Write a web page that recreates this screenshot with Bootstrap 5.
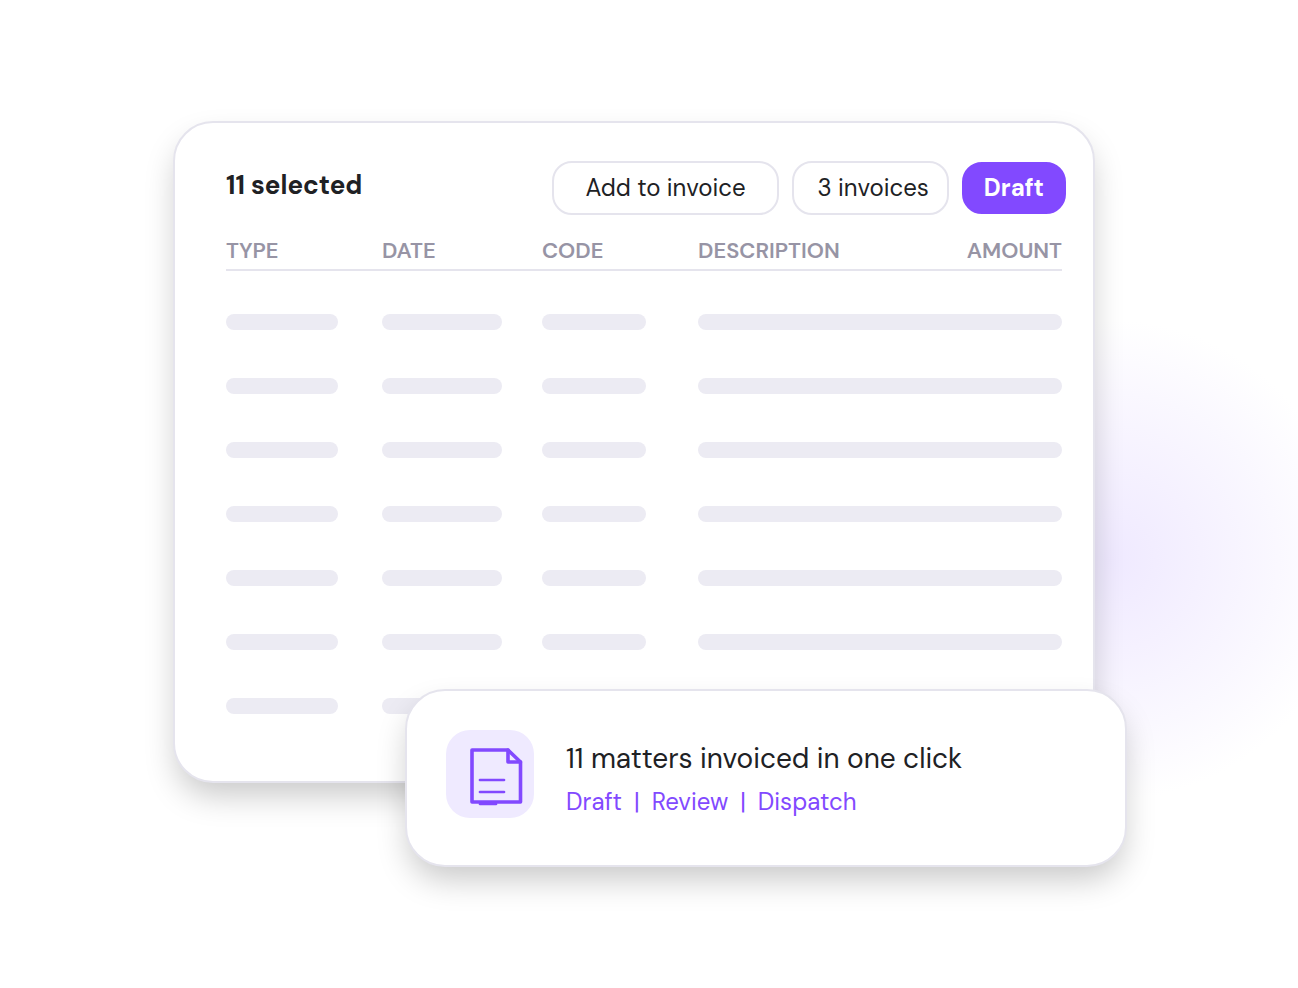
<!DOCTYPE html>
<html lang="en">
<head>
<meta charset="utf-8">
<meta name="viewport" content="width=device-width, initial-scale=1">
<title>Invoices</title>
<link href="https://cdn.jsdelivr.net/npm/bootstrap@5.3.0/dist/css/bootstrap.min.css" rel="stylesheet">
<style>
  :root {
    --violet: #8249ff;
    --violet-soft: #efeaff;
    --line: #e5e4ed;
    --bar: #ecebf3;
    --ink: #202124;
    --muted-ink: #9794a5;
  }
  body {
    min-height: 100vh;
    font-family: "DM Sans", Inter, sans-serif;
    color: var(--ink);
    background: #fff radial-gradient(circle 240px at calc(100% - 188px) 560px, #efe9ff 0, #f5f1ff 38%, #faf8ff 70%, #fff 100%) no-repeat;
  }
  .stage { padding: 121px 171px 121px 173px; }
  .panel {
    border: 2px solid var(--line);
    border-radius: 40px;
    background: #fff;
    box-shadow: 0 16px 32px -4px rgba(0, 0, 0, .22);
  }
  .sheet { margin-right: 32px; padding: 38px 31px 43px 51px; }
  .toolbar { margin-right: -4px; gap: 13px; }
  .count { font-size: 26px; line-height: 48px; font-weight: 700; }
  .pill {
    height: 54px;
    padding: 0 31px;
    border: 2px solid var(--line);
    border-radius: 20px;
    font-size: 24px;
    line-height: 50px;
    color: var(--ink);
    background: #fff;
  }
  .pill:hover { border-color: var(--violet); }
  .pill-short { padding: 0 18px 0 24px; }
  .pill-main {
    height: 52px;
    padding: 0 20px;
    border-color: var(--violet);
    background: var(--violet);
    color: #fff;
    line-height: 48px;
    font-weight: 700;
  }
  .ledger { table-layout: fixed; margin-top: 20px; }
  .ledger th {
    padding: 0 0 2px;
    border-bottom: 2px solid var(--line);
    font-size: 22px;
    line-height: 32px;
    font-weight: 600;
    color: var(--muted-ink);
  }
  .ledger td { height: 64px; padding: 0; vertical-align: middle; }
  .ledger tbody::before { content: ""; display: block; height: 19px; }
  .col-a { width: 156px; }
  .col-b { width: 160px; }
  .bar { height: 16px; border-radius: 8px; background: var(--bar); }
  .bar-type { width: 112px; }
  .bar-date { width: 120px; }
  .bar-code { width: 104px; }
  .notice {
    position: relative;
    margin: -94px 0 0 232px;
    padding: 39px 39px 47px;
    gap: 32px;
  }
  .tile { width: 88px; height: 88px; border-radius: 24px; background: var(--violet-soft); }
  .notice-title { font-size: 28px; line-height: 42px; }
  .steps { margin-top: 6px; gap: 12px; font-size: 24px; line-height: 32px; color: var(--violet); }
  .steps a { color: inherit; }
</style>
</head>
<body>
<main class="stage">
  <section class="panel sheet">
    <div class="toolbar d-flex align-items-center">
      <h1 class="count mb-0 me-auto align-self-start">11 selected</h1>
      <button type="button" class="btn pill">Add to invoice</button>
      <button type="button" class="btn pill pill-short">3 invoices</button>
      <button type="button" class="btn pill pill-main">Draft</button>
    </div>
    <table class="ledger w-100">
      <colgroup><col class="col-a"><col class="col-b"><col class="col-a"><col><col></colgroup>
      <thead>
        <tr><th scope="col">TYPE</th><th scope="col">DATE</th><th scope="col">CODE</th><th scope="col">DESCRIPTION</th><th scope="col" class="text-end">AMOUNT</th></tr>
      </thead>
      <tbody>
        <tr><td><div class="bar bar-type"></div></td><td><div class="bar bar-date"></div></td><td><div class="bar bar-code"></div></td><td colspan="2"><div class="bar"></div></td></tr>
        <tr><td><div class="bar bar-type"></div></td><td><div class="bar bar-date"></div></td><td><div class="bar bar-code"></div></td><td colspan="2"><div class="bar"></div></td></tr>
        <tr><td><div class="bar bar-type"></div></td><td><div class="bar bar-date"></div></td><td><div class="bar bar-code"></div></td><td colspan="2"><div class="bar"></div></td></tr>
        <tr><td><div class="bar bar-type"></div></td><td><div class="bar bar-date"></div></td><td><div class="bar bar-code"></div></td><td colspan="2"><div class="bar"></div></td></tr>
        <tr><td><div class="bar bar-type"></div></td><td><div class="bar bar-date"></div></td><td><div class="bar bar-code"></div></td><td colspan="2"><div class="bar"></div></td></tr>
        <tr><td><div class="bar bar-type"></div></td><td><div class="bar bar-date"></div></td><td><div class="bar bar-code"></div></td><td colspan="2"><div class="bar"></div></td></tr>
        <tr><td><div class="bar bar-type"></div></td><td><div class="bar bar-date"></div></td><td><div class="bar bar-code"></div></td><td colspan="2"><div class="bar"></div></td></tr>
      </tbody>
    </table>
  </section>

  <section class="panel notice d-flex">
    <div class="tile flex-shrink-0">
      <svg width="88" height="88" viewBox="0 0 88 88" fill="none" stroke="#8249ff" stroke-linecap="round" stroke-linejoin="round" aria-hidden="true">
        <path d="M26 20H62L74.500 32V72H26Z" stroke-width="3.600"/>
        <path d="M62 20V32H74.500" stroke-width="3.600"/>
        <path d="M34 50H58M34 62H58" stroke-width="2.700"/>
        <path d="M34 74H50" stroke-width="2.700"/>
      </svg>
    </div>
    <div class="pt-2">
      <div class="notice-title">11 matters invoiced in one click</div>
      <nav class="steps d-flex" aria-label="Invoice steps">
        <a href="#draft" class="text-decoration-none">Draft</a><span>|</span>
        <a href="#review" class="text-decoration-none">Review</a><span>|</span>
        <a href="#dispatch" class="text-decoration-none">Dispatch</a>
      </nav>
    </div>
  </section>
</main>
<script src="https://cdn.jsdelivr.net/npm/bootstrap@5.3.0/dist/js/bootstrap.bundle.min.js"></script>
</body>
</html>
